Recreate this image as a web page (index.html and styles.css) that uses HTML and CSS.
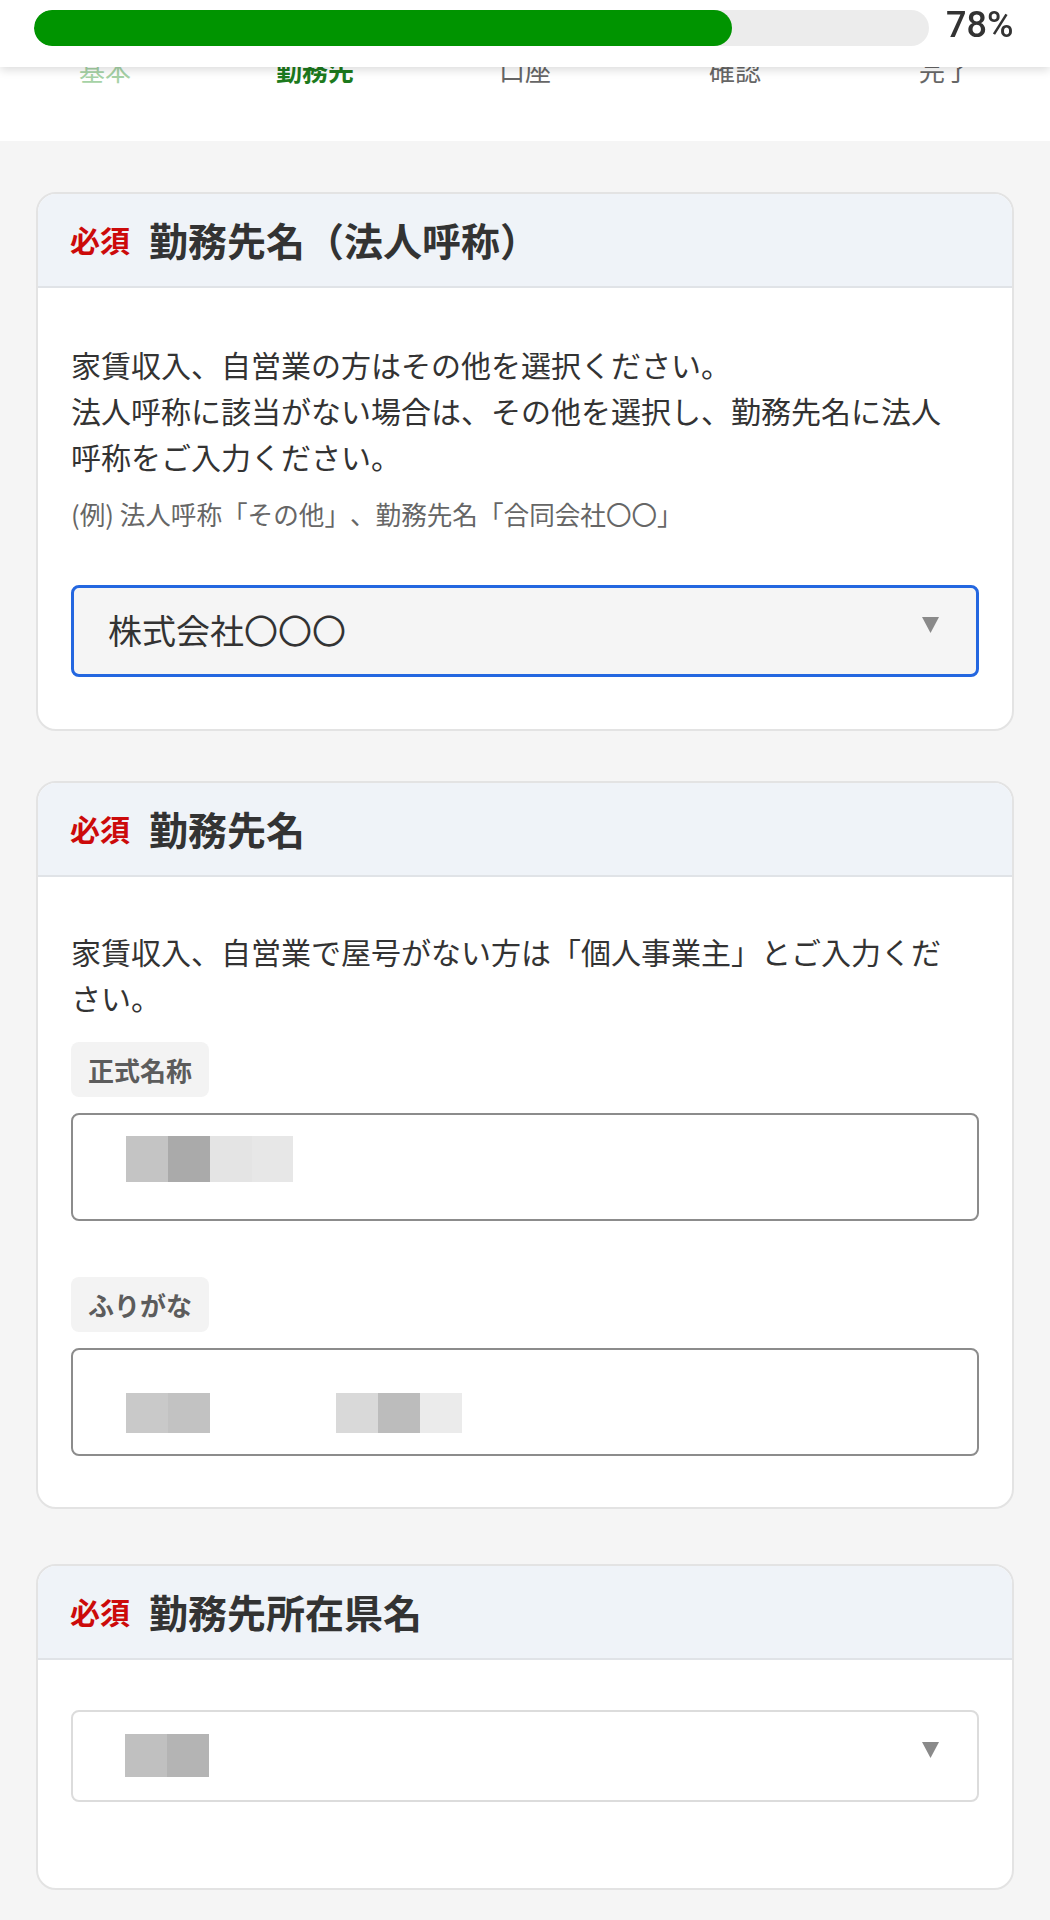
FILE: index.html
```html
<!DOCTYPE html>
<html lang="ja">
<head>
<meta charset="utf-8">
<title>勤務先情報</title>
<link rel="stylesheet" href="styles.css">
</head>
<body>
<header class="topbar">
  <div class="track"><div class="fill" style="width:78%"></div></div>
  <div class="percent">78%</div>
</header>

<nav class="steps">
  <div class="step done">基本</div>
  <div class="step current">勤務先</div>
  <div class="step">口座</div>
  <div class="step">確認</div>
  <div class="step">完了</div>
</nav>

<main class="content">
  <section class="card card-first">
    <div class="card-head">
      <span class="req">必須</span>
      <h2 class="card-title">勤務先名（法人呼称）</h2>
    </div>
    <div class="card-body body-select">
      <p class="desc">家賃収入、自営業の方はその他を選択ください。<br>法人呼称に該当がない場合は、その他を選択し、勤務先名に法人呼称をご入力ください。</p>
      <p class="example">(例) 法人呼称「その他」、勤務先名「合同会社〇〇」</p>
      <div class="select focused">
        <span class="select-value">株式会社〇〇〇</span>
        <svg class="caret" width="17" height="16" viewBox="0 0 17 16"><polygon points="0,0 17,0 8.5,16" fill="#8a8a8a"/></svg>
      </div>
    </div>
  </section>

  <section class="card card-second">
    <div class="card-head">
      <span class="req">必須</span>
      <h2 class="card-title">勤務先名</h2>
    </div>
    <div class="card-body body-inputs">
      <p class="desc">家賃収入、自営業で屋号がない方は「個人事業主」とご入力ください。</p>
      <div class="chip chip-first">正式名称</div>
      <div class="input input-name">
        <span class="blk b1"></span><span class="blk b2"></span><span class="blk b3"></span><span class="blk b4"></span>
      </div>
      <div class="chip chip-second">ふりがな</div>
      <div class="input input-kana">
        <span class="blk k1"></span><span class="blk k2"></span><span class="gap"></span><span class="blk k3"></span><span class="blk k4"></span><span class="blk k5"></span>
      </div>
    </div>
  </section>

  <section class="card card-third">
    <div class="card-head">
      <span class="req">必須</span>
      <h2 class="card-title">勤務先所在県名</h2>
    </div>
    <div class="card-body body-pref">
      <div class="select plain">
        <span class="pref-value"><span class="blk p1"></span><span class="blk p2"></span></span>
        <svg class="caret" width="17" height="16" viewBox="0 0 17 16"><polygon points="0,0 17,0 8.5,16" fill="#8a8a8a"/></svg>
      </div>
    </div>
  </section>
</main>
</body>
</html>
```

FILE: styles.css
```css
* { box-sizing: border-box; }

html, body {
  margin: 0;
  padding: 0;
}

body {
  font-family: "Noto Sans CJK JP", "Noto Sans", sans-serif;
  color: #333;
  background: #f5f5f5;
  text-spacing-trim: space-all;
}

/* fixed progress header */
.topbar {
  position: fixed;
  top: 0;
  left: 0;
  right: 0;
  height: 67px;
  background: #fff;
  display: flex;
  align-items: flex-start;
  padding: 10px 0 0 34px;
  gap: 17px;
  box-shadow: 0 3px 9px rgba(0, 0, 0, 0.14);
  z-index: 10;
}

.track {
  flex: 0 0 895px;
  height: 36px;
  border-radius: 18px;
  background: #ececec;
  overflow: hidden;
}

.fill {
  height: 100%;
  border-radius: 18px;
  background: #009400;
}

.percent {
  font-family: Roboto, "Noto Sans", sans-serif;
  font-size: 36px;
  line-height: 31px;
  font-weight: 500;
  color: #333;
}

/* steps nav, partly under the header */
.steps {
  display: grid;
  grid-template-columns: repeat(5, 1fr);
  background: #fff;
  padding: 57px 0 58px;
}

.step {
  text-align: center;
  font-size: 26px;
  line-height: 26px;
  color: #666;
}

.step.done { color: #a6d2a6; }
.step.current { color: #1d7a1d; font-weight: 700; }

/* content */
.content {
  padding: 51px 36px 40px;
  display: flex;
  flex-direction: column;
}

.card {
  background: #fff;
  border: 2px solid #e3e3e3;
  border-radius: 20px;
  overflow: hidden;
}

.card-second { margin-top: 50px; }
.card-third { margin-top: 55px; }

.card-head {
  height: 96px;
  margin-top: -2px;
  padding: 0 32px;
  display: flex;
  align-items: center;
  background: #eff3f8;
  border-bottom: 2px solid #e0e3e7;
}

.req {
  font-size: 30px;
  font-weight: 700;
  color: #cc0a0a;
  margin-right: 19px;
}

.card-title {
  margin: 0;
  font-size: 39px;
  font-weight: 700;
  color: #333;
  line-height: 1;
}

.card-body {
  padding: 0 33px;
}

.body-select { padding-top: 53px; padding-bottom: 52px; }
.body-inputs { padding-top: 51px; padding-bottom: 51px; }
.body-pref { padding-top: 50px; padding-bottom: 86px; }

.desc {
  margin: 0;
  max-width: 885px;
  font-size: 30px;
  line-height: 46px;
  color: #333;
}

.example {
  margin: 17px 0 0;
  font-size: 25.6px;
  line-height: 36px;
  color: #666;
}

.select {
  height: 92px;
  border-radius: 8px;
  display: flex;
  align-items: center;
  justify-content: space-between;
  padding: 0 37px 0 34px;
}

.select.focused {
  margin-top: 53px;
  border: 3px solid #2467e0;
  background: #f5f5f5;
}

.select.plain {
  border: 2px solid #dcdcdc;
  background: #fff;
  padding-left: 52px;
  padding-right: 38px;
}

.select-value {
  font-size: 34px;
  color: #333;
  margin-top: -4px;
}

.caret {
  display: block;
  margin-top: -12px;
}

.chip {
  display: inline-block;
  height: 55px;
  line-height: 55px;
  padding: 0 17px;
  border-radius: 8px;
  background: #f3f3f3;
  font-size: 26px;
  font-weight: 700;
  color: #5c5c5c;
}

.chip-first { margin-top: 22px; }
.chip-second { margin-top: 56px; }

.input {
  height: 108px;
  margin-top: 16px;
  border: 2px solid #8c8c8c;
  border-radius: 8px;
  background: #fff;
  display: flex;
  align-items: flex-start;
  padding-left: 53px;
}

.input-name { padding-top: 21px; }
.input-kana { padding-top: 43px; }

.blk {
  display: block;
  width: 42px;
}

.input-name .blk { height: 46px; }
.b1 { background: #c4c4c4; }
.b2 { background: #aaaaaa; }
.b3 { background: #e4e4e4; }
.b4 { background: #e7e7e7; width: 41px; }

.input-kana .blk { height: 40px; }
.k1 { background: #c9c9c9; }
.k2 { background: #c2c2c2; }
.gap { display: block; width: 126px; }
.k3 { background: #d9d9d9; }
.k4 { background: #bcbcbc; }
.k5 { background: #ebebeb; }

.pref-value {
  display: flex;
  margin-top: -2px;
}

.pref-value .blk { height: 43px; }
.p1 { background: #c0c0c0; }
.p2 { background: #b4b4b4; }
```
